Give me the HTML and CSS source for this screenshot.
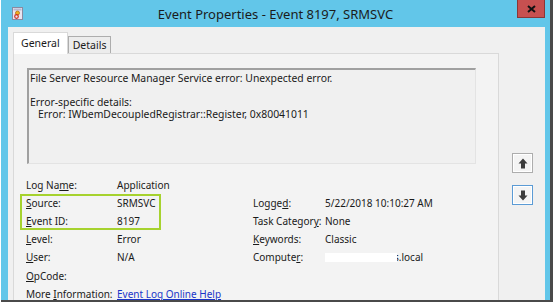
FILE: index.html
```html
<!DOCTYPE html>
<html>
<head>
<meta charset="utf-8">
<link rel="stylesheet" href="styles.css">
</head>
<body>
<div class="window">
  <div class="titlebar">
    <span class="app-icon">
      <svg width="11" height="13" viewBox="0 0 11 13">
        <rect x="0.5" y="0.5" width="10" height="12" fill="#e8e4f0" stroke="#8a8aa0"/>
        <rect x="1.5" y="1.5" width="8" height="2" fill="#b8b8d0"/>
        <circle cx="5.5" cy="6" r="2" fill="#f0b020" stroke="#b07010" stroke-width="0.8"/>
        <circle cx="4.5" cy="9.5" r="1.8" fill="none" stroke="#d03020" stroke-width="1.2"/>
      </svg>
    </span>
    <span class="title">Event Properties - Event 8197, SRMSVC</span>
    <span class="close">
      <svg width="9" height="8" viewBox="0 0 9 8"><path d="M1 1 L8 7 M8 1 L1 7" stroke="#111" stroke-width="2"/></svg>
    </span>
  </div>
  <div class="client">
    <div class="tabarea">
      <div class="tabs">
        <div class="tab active">General</div>
        <div class="tab">Details</div>
      </div>
      <div class="panel">
        <div class="desc">
          <div>File Server Resource Manager Service error: Unexpected error.</div>
          <div>&nbsp;</div>
          <div>Error-specific details:</div>
          <div class="indent">Error: IWbemDecoupledRegistrar::Register, 0x80041011</div>
        </div>
        <div class="props">
          <div>Log Na<u>m</u>e:</div><div>Application</div><div></div><div></div>
          <div><u>S</u>ource:</div><div>SRMSVC</div><div>Logge<u>d</u>:</div><div>5/22/2018 10:10:27 AM</div>
          <div><u>E</u>vent ID:</div><div>8197</div><div>Task Categor<u>y</u>:</div><div>None</div>
          <div><u>L</u>evel:</div><div>Error</div><div><u>K</u>eywords:</div><div>Classic</div>
          <div><u>U</u>ser:</div><div>N/A</div><div>Compute<u>r</u>:</div><div><span class="redact"></span><span class="host">s.local</span></div>
          <div><u>O</u>pCode:</div><div></div><div></div><div></div>
          <div>More <u>I</u>nformation:</div><div class="span3"><a class="link" href="#">Event Log Online Help</a></div>
        </div>
        <div class="highlight"></div>
      </div>
    </div>
    <div class="navbtns">
      <div class="navbtn">
        <svg width="10" height="11" viewBox="0 0 10 11"><path d="M5 0.5 L9.5 5.5 L7 5.5 L7 10.5 L3 10.5 L3 5.5 L0.5 5.5 Z" fill="#3c3c3c"/></svg>
      </div>
      <div class="navbtn focus">
        <svg width="10" height="11" viewBox="0 0 10 11"><path d="M5 10.5 L9.5 5.5 L7 5.5 L7 0.5 L3 0.5 L3 5.5 L0.5 5.5 Z" fill="#3c3c3c"/></svg>
      </div>
    </div>
  </div>
</div>
</body>
</html>
```
FILE: styles.css
```css
html, body {
  margin: 0;
  padding: 0;
  background: #ffffff;
}
body {
  width: 555px;
  height: 307px;
  overflow: hidden;
  font-family: "Noto Sans", "Open Sans", sans-serif;
  font-size: 10px;
  color: #1a1a1a;
}
.window {
  width: 549px;
  height: 300px;
  margin-left: 1px;
  background: #62c6e9;
  border-right: 3px solid #4a4a4a;
  border-bottom: 2px solid #4a4a4a;
  display: flex;
  flex-direction: column;
}
.titlebar {
  height: 27px;
  display: flex;
  align-items: flex-start;
  position: relative;
}
.app-icon {
  margin: 7px 0 0 11px;
  display: flex;
}
.title {
  position: absolute;
  left: 0;
  right: 0;
  top: 5px;
  text-align: center;
  font-size: 13px;
  color: #1b1b1b;
}
.close {
  position: absolute;
  right: 5px;
  top: 0;
  width: 28px;
  height: 18px;
  background: #c75050;
  border: 1px solid #8a3636;
  border-top: none;
  box-sizing: border-box;
  display: flex;
  align-items: center;
  justify-content: center;
}
.client {
  flex: 1;
  margin: 0 5px 0 7px;
  background: #f0f0f0;
  display: flex;
  overflow: hidden;
}
.tabarea {
  margin: 5px 0 0 5px;
  width: 486px;
  display: flex;
  flex-direction: column;
}
.tabs {
  display: flex;
  align-items: flex-end;
  height: 21px;
  position: relative;
  z-index: 1;
}
.tab {
  box-sizing: border-box;
  height: 17px;
  padding: 0 4px;
  border: 1px solid #adadad;
  border-bottom: none;
  background: #ececec;
  line-height: 16px;
  font-size: 10.5px;
}
.tab.active {
  height: 22px;
  margin-bottom: -1px;
  background: #ffffff;
  border-color: #d9d9d9;
  padding: 2px 7px 0 7px;
  line-height: 17px;
}
.panel {
  position: relative;
  height: 260px;
  border: 1px solid #d9d9d9;
  background: #f3f3f3;
  padding: 14px 0 0 13px;
}
.desc {
  box-sizing: border-box;
  width: 449px;
  height: 96px;
  border-top: 2px solid #a0a0a0;
  border-left: 2px solid #a0a0a0;
  border-right: 1px solid #e3e3e3;
  border-bottom: 1px solid #e3e3e3;
  background: #f0f0f0;
  padding: 2px 0 0 1px;
  font-size: 10.4px;
  line-height: 12px;
}
.indent {
  padding-left: 8px;
}
.props {
  margin: 12px 0 0 -1px;
  display: grid;
  grid-template-columns: 91px 136px 72px auto;
  grid-auto-rows: 18.1px;
  align-items: center;
}
.span3 {
  grid-column: span 3;
}
.link {
  color: #1a35c8;
  text-decoration: underline;
}
.redact {
  display: inline-block;
  width: 72px;
  height: 9px;
  background: #ffffff;
  vertical-align: -1px;
  position: relative;
  z-index: 1;
  margin-right: -3px;
}
.highlight {
  position: absolute;
  left: 6px;
  top: 140px;
  width: 141px;
  height: 36px;
  box-sizing: border-box;
  border: 2px solid #a6d22e;
}
.navbtns {
  margin: 126px 0 0 13px;
  display: flex;
  flex-direction: column;
  gap: 12px;
}
.navbtn {
  box-sizing: border-box;
  width: 21px;
  height: 20px;
  border: 1px solid #adadad;
  background: #f4f4f4;
  box-shadow: inset 0 0 0 1px #ffffff;
  display: flex;
  align-items: center;
  justify-content: center;
}
.navbtn.focus {
  border-color: #5b9bd5;
}
```
